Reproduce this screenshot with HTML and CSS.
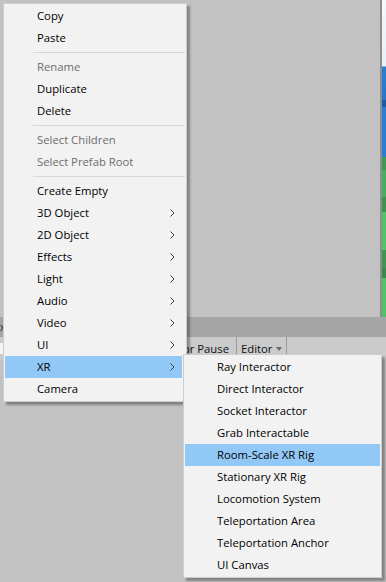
FILE: index.html
```html
<!DOCTYPE html>
<html lang="en">
<head>
    <meta charset="UTF-8">
    <meta name="viewport" content="width=device-width, initial-scale=1.0">
    <title>Hierarchy Context Menu</title>
    <link rel="stylesheet" href="styles.css">
</head>
<body>

<div class="editor">
    <div class="scene-row">
        <div class="hierarchy"></div>
        <div class="scene-edge"></div>
        <div class="scene-view"></div>
    </div>
    <div class="tab-bar"><span class="tab-close">x</span></div>
    <div class="console-toolbar">
        <div class="search-box"></div>
        <div class="tool-button pause">Error Pause</div>
        <div class="tool-button dropdown">Editor <span class="caret"></span></div>
    </div>
    <div class="console-body"></div>
</div>

<!-- Main context menu -->
<div class="menu main-menu">
    <div class="menu-item">Copy</div>
    <div class="menu-item">Paste</div>
    <div class="menu-sep"></div>
    <div class="menu-item disabled">Rename</div>
    <div class="menu-item">Duplicate</div>
    <div class="menu-item">Delete</div>
    <div class="menu-sep"></div>
    <div class="menu-item disabled">Select Children</div>
    <div class="menu-item disabled">Select Prefab Root</div>
    <div class="menu-sep"></div>
    <div class="menu-item">Create Empty</div>
    <div class="menu-item has-sub">3D Object<svg class="chevron" viewBox="0 0 5 8"><polyline points="0.5,0.5 4,4 0.5,7.5"/></svg></div>
    <div class="menu-item has-sub">2D Object<svg class="chevron" viewBox="0 0 5 8"><polyline points="0.5,0.5 4,4 0.5,7.5"/></svg></div>
    <div class="menu-item has-sub">Effects<svg class="chevron" viewBox="0 0 5 8"><polyline points="0.5,0.5 4,4 0.5,7.5"/></svg></div>
    <div class="menu-item has-sub">Light<svg class="chevron" viewBox="0 0 5 8"><polyline points="0.5,0.5 4,4 0.5,7.5"/></svg></div>
    <div class="menu-item has-sub">Audio<svg class="chevron" viewBox="0 0 5 8"><polyline points="0.5,0.5 4,4 0.5,7.5"/></svg></div>
    <div class="menu-item has-sub">Video<svg class="chevron" viewBox="0 0 5 8"><polyline points="0.5,0.5 4,4 0.5,7.5"/></svg></div>
    <div class="menu-item has-sub">UI<svg class="chevron" viewBox="0 0 5 8"><polyline points="0.5,0.5 4,4 0.5,7.5"/></svg></div>
    <div class="menu-item has-sub active">XR<svg class="chevron" viewBox="0 0 5 8"><polyline points="0.5,0.5 4,4 0.5,7.5"/></svg></div>
    <div class="menu-item">Camera</div>
</div>

<!-- XR submenu -->
<div class="menu sub-menu">
    <div class="menu-item">Ray Interactor</div>
    <div class="menu-item">Direct Interactor</div>
    <div class="menu-item">Socket Interactor</div>
    <div class="menu-item">Grab Interactable</div>
    <div class="menu-item active">Room-Scale XR Rig</div>
    <div class="menu-item">Stationary XR Rig</div>
    <div class="menu-item">Locomotion System</div>
    <div class="menu-item">Teleportation Area</div>
    <div class="menu-item">Teleportation Anchor</div>
    <div class="menu-item">UI Canvas</div>
</div>

</body>
</html>
```

FILE: styles.css
```css
/* Editor background */
body {
    margin: 0;
    font-family: "Open Sans", "Noto Sans", sans-serif;
    font-size: 11.3px;
    color: #000;
    background-color: #c2c2c2;
    overflow: hidden;
}

.editor {
    display: flex;
    flex-direction: column;
    height: 582px;
}

/* Hierarchy panel and the edge of the scene view */
.scene-row {
    display: flex;
    height: 317px;
}

.hierarchy {
    flex: 1;
    background-color: #c2c2c2;
}

.scene-edge {
    width: 2px;
    background-color: #8d8d8d;
}

.scene-view {
    width: 4px;
    background: linear-gradient(to bottom,
        #f3f8fb 0, #e6f1f8 66px,
        #2b7fd2 67px, #2777c8 100px,
        #1f5ca6 100px, #1f5ca6 107px,
        #2a7dd0 107px, #2a7dd0 157px,
        #3f9a55 157px, #3f9a55 170px,
        #47ad5f 170px, #47ad5f 197px,
        #3e9352 197px, #3e9352 212px,
        #52c468 212px, #52c468 250px,
        #3f9654 250px, #3f9654 268px,
        #3a8a4e 268px, #3a8a4e 278px,
        #51c367 278px, #51c367 317px);
}

/* Console tab bar and toolbar */
.tab-bar {
    height: 20px;
    background-color: #a5a5a5;
    line-height: 20px;
}

.tab-close {
    font-size: 11px;
    color: #222;
}

.console-toolbar {
    display: flex;
    align-items: stretch;
    height: 23px;
    background-color: #cbcbcb;
}

.search-box {
    width: 140px;
    margin: 6px 0 6px 0;
    background-color: #f4f4f4;
}

.tool-button {
    display: flex;
    align-items: center;
    padding-bottom: 1px;
    border-right: 1px solid #9a9a9a;
    color: #111;
}

.pause {
    width: 89px;
    justify-content: flex-end;
    padding-right: 7px;
}

.dropdown {
    width: 45px;
    padding-left: 4px;
}

.caret {
    width: 0;
    height: 0;
    margin-left: 4px;
    margin-top: 1px;
    border-left: 3.5px solid transparent;
    border-right: 3.5px solid transparent;
    border-top: 4px solid #6a6a6a;
}

.console-body {
    flex: 1;
    background-color: #c2c2c2;
}

/* Context menus */
.menu {
    position: absolute;
    box-sizing: border-box;
    padding: 1px 0;
    background-color: #f2f2f2;
    border: 1px solid #cdcdcd;
    box-shadow: 3px 3px 2px rgba(0, 0, 0, 0.32);
}

.main-menu {
    left: 3px;
    top: 3px;
    width: 184px;
}

.sub-menu {
    left: 183px;
    top: 354px;
    width: 199px;
}

.menu-item {
    display: flex;
    align-items: center;
    justify-content: space-between;
    box-sizing: border-box;
    height: 22px;
    margin: 0 1px;
    padding: 0 7px 2px 32px;
    white-space: nowrap;
}

.main-menu .menu-item {
    margin-right: 4px;
}

.menu-item.disabled {
    color: #6d6d6d;
}

.menu-item.active {
    background-color: #92c8f6;
}

.chevron {
    width: 5px;
    height: 8px;
    margin-top: 2px;
    fill: none;
    stroke: #3a3a3a;
    stroke-width: 1;
}

.menu-sep {
    height: 1px;
    margin: 3px 1px 3px 29px;
    background-color: #d7d7d7;
}
```
